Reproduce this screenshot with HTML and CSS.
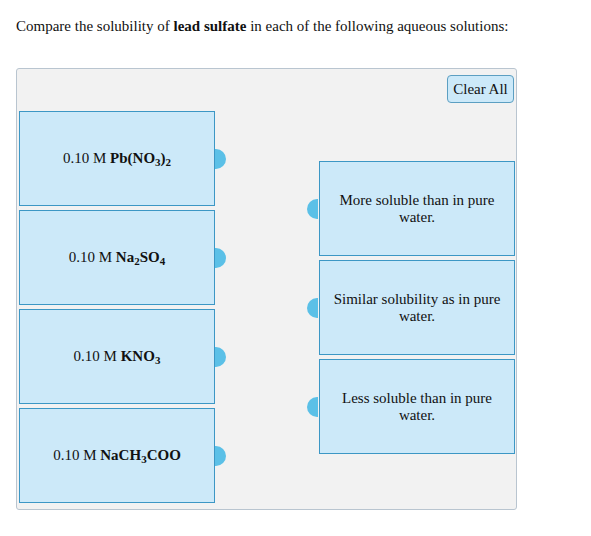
FILE: index.html
```html
<!DOCTYPE html>
<html>
<head>
    <link rel="stylesheet" href="styles.css">
</head>
<body>
    <p class="question">Compare the solubility of <b>lead sulfate</b> in each of the following aqueous solutions:</p>

    <div class="matcher">
        <div class="toolbar">
            <button class="clear-btn">Clear All</button>
        </div>
        <div class="board">
            <div class="column sources">
                <div class="item"><span>0.10 M <b>Pb(NO<sub>3</sub>)<sub>2</sub></b></span><span class="dot dot-right"></span></div>
                <div class="item"><span>0.10 M <b>Na<sub>2</sub>SO<sub>4</sub></b></span><span class="dot dot-right"></span></div>
                <div class="item"><span>0.10 M <b>KNO<sub>3</sub></b></span><span class="dot dot-right"></span></div>
                <div class="item"><span>0.10 M <b>NaCH<sub>3</sub>COO</b></span><span class="dot dot-right"></span></div>
            </div>
            <div class="column targets">
                <div class="item"><span class="dot dot-left"></span><span>More soluble than in pure water.</span></div>
                <div class="item"><span class="dot dot-left"></span><span>Similar solubility as in pure water.</span></div>
                <div class="item"><span class="dot dot-left"></span><span>Less soluble than in pure water.</span></div>
            </div>
        </div>
    </div>
</body>
</html>
```

FILE: styles.css
```css
body {
    margin: 0;
    padding: 0 16px;
    font-family: "Liberation Serif", "Times New Roman", serif;
    font-size: 15px;
    color: #111;
    background-color: white;
}
.question {
    margin: 17px 0 0;
    line-height: 18px;
    height: 51px;
}
.matcher {
    width: 499px;
    height: 440px;
    background-color: #f2f2f2;
    border: 1px solid #b9c5d0;
    border-radius: 3px;
}
.toolbar {
    display: flex;
    justify-content: flex-end;
    padding: 6px 2px 0 0;
}
.clear-btn {
    width: 67px;
    height: 28px;
    padding: 0;
    font-family: inherit;
    font-size: 15px;
    color: #111;
    background-color: #cce9f9;
    border: 1px solid #5c9fc2;
    border-radius: 4px;
}
.board {
    display: flex;
    gap: 104px;
    padding: 8px 0 0 2px;
}
.column {
    display: flex;
    flex-direction: column;
    gap: 4px;
}
.targets {
    margin-top: 50px;
}
.item {
    position: relative;
    width: 178px;
    height: 93px;
    padding: 0 8px;
    display: flex;
    align-items: center;
    justify-content: center;
    text-align: center;
    line-height: 17px;
    background-color: #cce9f9;
    border: 1px solid #3c97c5;
}
.item b {
    white-space: nowrap;
}
sub {
    font-size: 11px;
    line-height: 0;
    vertical-align: -3px;
}
.dot {
    position: absolute;
    top: 50%;
    width: 11px;
    height: 20px;
    margin-top: -10px;
    background-color: #5bc0e7;
}
.dot-right {
    right: -12px;
    border-radius: 0 10px 10px 0;
}
.dot-left {
    left: -13px;
    border-radius: 10px 0 0 10px;
}
```
